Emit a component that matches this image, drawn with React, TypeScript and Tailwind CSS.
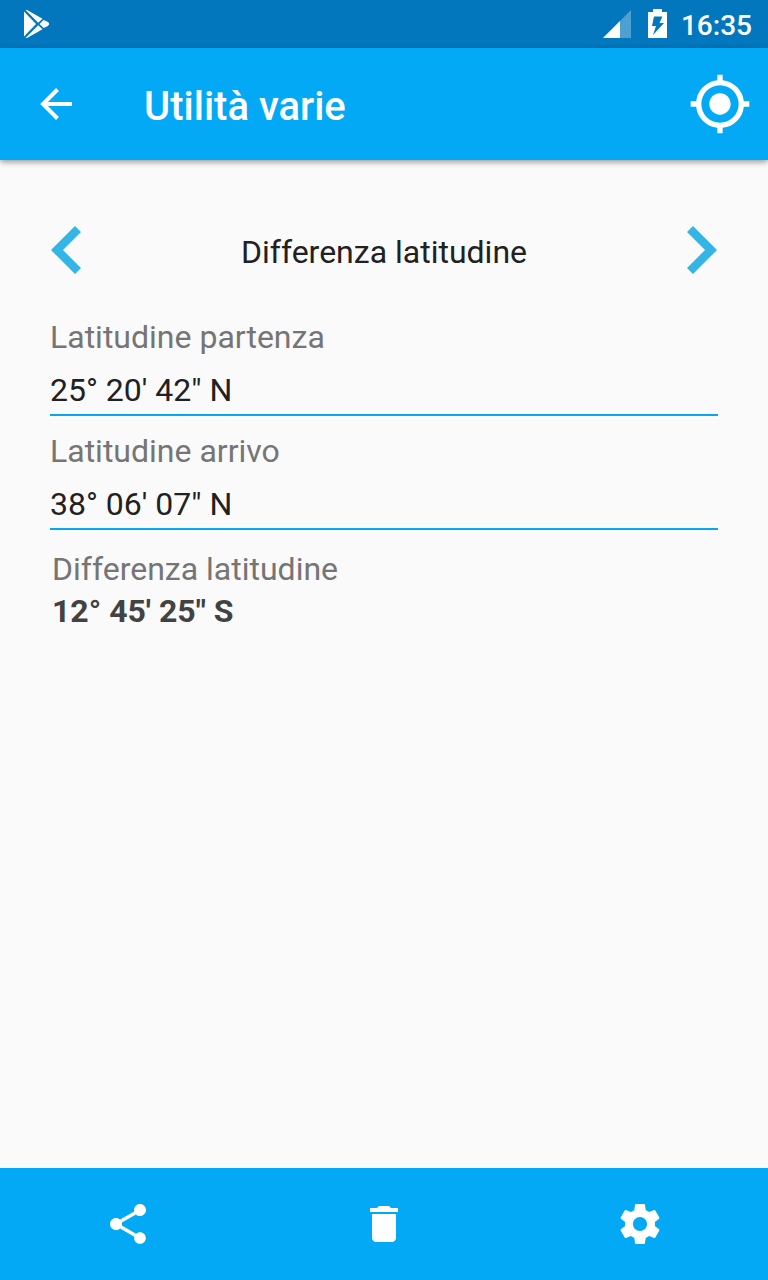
import React, { useState } from 'react';
import { MdDelete, MdGpsFixed, MdShare } from 'react-icons/md';

const PlayStoreIcon: React.FC = () => (
  <svg className="h-8 w-8" viewBox="0 0 32 32" fill="#fff" aria-hidden="true">
    <path d="M4 3.500L16 16L4 28.500Z" />
    <path d="M5.500 2H7L22.500 10.800L18.200 14.800Z" />
    <path d="M5.500 30H7L22.500 21.200L18.200 17.200Z" />
    <path d="M19.500 16L23.600 12L27.500 13.800Q30.800 16 27.500 18.200L23.600 20Z" />
  </svg>
);

const SignalIcon: React.FC = () => (
  <svg className="h-8 w-8" viewBox="0 0 32 32" fill="#fff" aria-hidden="true">
    <path d="M31 2V30H3Z" opacity="0.3" />
    <path d="M20 13V30H3Z" />
  </svg>
);

const BatteryIcon: React.FC = () => (
  <svg className="h-8 w-5" viewBox="0 0 20 32" fill="#fff" fillRule="evenodd" aria-hidden="true">
    <path d="M5 1H14V4H19V30H0V4H5ZM6 8.500L4 18H8L5 27L16 15H11.500L14.500 8.500Z" />
  </svg>
);

const BackIcon: React.FC = () => (
  <svg className="h-12 w-12" viewBox="0 0 48 48" fill="none" stroke="#fff" strokeWidth="4" aria-hidden="true">
    <path d="M40 24H11M25.500 9.500L11 24L25.500 38.500" />
  </svg>
);

const ChevronIcon: React.FC<{ flipped?: boolean }> = ({ flipped }) => (
  <svg className="h-12 w-8" viewBox="0 0 32 48" fill="#33b5e5" aria-hidden="true">
    <path d={flipped ? 'M7 0L31 24L7 48L1 42L19 24L1 6Z' : 'M25 0L1 24L25 48L31 42L13 24L31 6Z'} />
  </svg>
);

const SettingsIcon: React.FC = () => (
  <svg className="h-12 w-12" viewBox="0 0 24 24" fill="currentColor" aria-hidden="true">
    <path d="M19.43 12.98c.04-.32.07-.64.07-.98s-.03-.66-.07-.98l2.110-1.650c.19-.15.24-.42.12-.64l-2-3.460c-.12-.22-.39-.3-.61-.22l-2.490 1c-.52-.4-1.080-.73-1.690-.98l-.38-2.650C14.460 2.180 14.250 2 14 2h-4c-.25 0-.46.18-.49.42l-.38 2.650c-.61.25-1.170.59-1.690.98l-2.490-1c-.23-.09-.49 0-.61.22l-2 3.460c-.13.22-.07.49.12.64l2.110 1.650c-.04.32-.07.65-.07.98s.03.66.07.98l-2.110 1.650c-.19.15-.24.42-.12.64l2 3.460c.12.22.39.3.61.22l2.490-1c.52.4 1.080.73 1.690.98l.38 2.650c.03.24.24.42.49.42h4c.25 0 .46-.18.49-.42l.38-2.650c.61-.25 1.170-.59 1.690-.98l2.490 1c.23.09.49 0 .61-.22l2-3.460c.12-.22.07-.49-.12-.64l-2.110-1.650zM12 15.500c-1.930 0-3.500-1.570-3.500-3.500s1.570-3.500 3.500-3.500 3.500 1.570 3.500 3.500-1.570 3.500-3.500 3.500z" />
  </svg>
);

interface LatitudeFieldProps {
  id: string;
  label: string;
  value: string;
  onChange: (value: string) => void;
}

const LatitudeField: React.FC<LatitudeFieldProps> = ({ id, label, value, onChange }) => (
  <div className="flex flex-col gap-2">
    <label htmlFor={id} className="leading-10 text-[#757575]">
      {label}
    </label>
    <input
      id={id}
      type="text"
      value={value}
      onChange={(e) => onChange(e.target.value)}
      className="h-[51px] w-full border-b-2 border-[#03a9f4] bg-transparent text-[#212121] outline-none"
    />
  </div>
);

const App: React.FC = () => {
  const [departure, setDeparture] = useState('25° 20\' 42" N');
  const [arrival, setArrival] = useState('38° 06\' 07" N');

  return (
    <div className="flex min-h-screen flex-col bg-[#fafafa] font-['Roboto',sans-serif] text-[32px]">
      {/* Status bar */}
      <div className="flex h-12 items-center justify-between bg-[#0277bd] pr-4 pl-5 text-white">
        <PlayStoreIcon />
        <div className="flex items-center">
          <SignalIcon />
          <div className="ml-4 flex">
            <BatteryIcon />
          </div>
          <span className="ml-[13px] pt-1 text-[28px] leading-11 font-medium">16:35</span>
        </div>
      </div>

      {/* Toolbar */}
      <header className="flex h-28 items-center bg-[#03a9f4] pr-4 pl-8 text-white shadow-[0_2px_6px_rgba(0,0,0,0.4)]">
        <button type="button" aria-label="Indietro">
          <BackIcon />
        </button>
        <h1 className="ml-16 flex-1 pt-1.5 text-[40px] font-medium">Utilità varie</h1>
        <button type="button" aria-label="Posizione attuale">
          <MdGpsFixed className="h-16 w-16" />
        </button>
      </header>

      <main className="flex-1 px-[50px] pt-16">
        {/* Calculation selector */}
        <div className="flex h-[51px] items-center justify-between">
          <button type="button" aria-label="Precedente">
            <ChevronIcon />
          </button>
          <h2 className="pt-1 text-[#212121]">Differenza latitudine</h2>
          <button type="button" aria-label="Successivo">
            <ChevronIcon flipped />
          </button>
        </div>

        <form className="mt-[42px] flex flex-col gap-[15px]">
          <LatitudeField id="departure" label="Latitudine partenza" value={departure} onChange={setDeparture} />
          <LatitudeField id="arrival" label="Latitudine arrivo" value={arrival} onChange={setArrival} />
        </form>

        {/* Result */}
        <div className="mt-[18px] px-0.5 leading-[42px]">
          <p className="text-[#757575]">Differenza latitudine</p>
          <p className="font-bold text-[#424242]">12° 45' 25" S</p>
        </div>
      </main>

      {/* Bottom actions */}
      <footer className="grid h-28 grid-cols-3 bg-[#03a9f4] text-white">
        <button type="button" aria-label="Condividi" className="flex items-center justify-center">
          <MdShare className="h-12 w-12" />
        </button>
        <button type="button" aria-label="Elimina" className="flex items-center justify-center">
          <MdDelete className="h-12 w-12" />
        </button>
        <button type="button" aria-label="Impostazioni" className="flex items-center justify-center">
          <SettingsIcon />
        </button>
      </footer>
    </div>
  );
};

export default App;
